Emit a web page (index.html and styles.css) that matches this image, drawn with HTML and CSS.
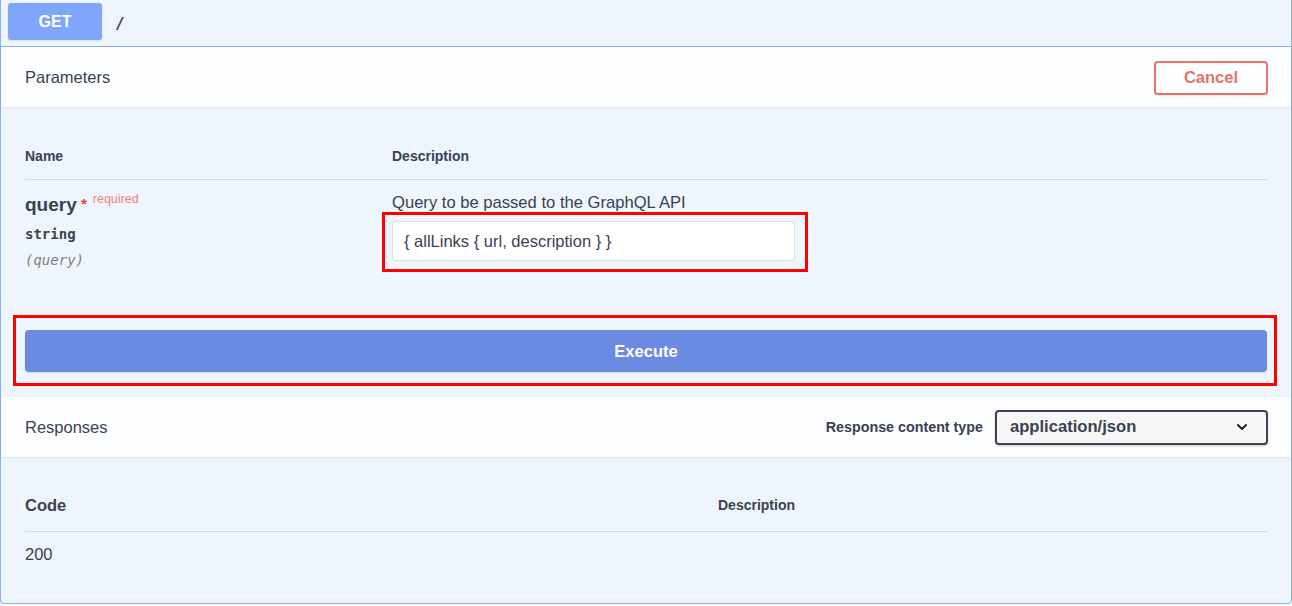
FILE: index.html
```html
<!DOCTYPE html>
<html>
<head>
<meta charset="utf-8">
<link rel="stylesheet" href="styles.css">
</head>
<body>
<div class="opblock">
  <div class="summary">
    <span class="method">GET</span>
    <span class="path">/</span>
  </div>
  <div class="section-header">
    <h4 class="section-title">Parameters</h4>
    <button class="btn-cancel">Cancel</button>
  </div>
  <div class="params">
    <div class="params-head">
      <div class="col-name">Name</div>
      <div class="col-desc">Description</div>
    </div>
    <div class="params-row">
      <div class="col-name">
        <div class="param-name">query<span class="star">&nbsp;*</span><span class="required">required</span></div>
        <div class="param-type">string</div>
        <div class="param-in">(query)</div>
      </div>
      <div class="col-desc">
        <div class="param-desc">Query to be passed to the GraphQL API</div>
        <div class="highlight-input">
          <div class="text-input">{ allLinks { url, description } }</div>
        </div>
      </div>
    </div>
  </div>
  <div class="execute-wrap">
    <div class="highlight-exec">
      <button class="btn-execute">Execute</button>
    </div>
  </div>
  <div class="section-header">
    <h4 class="section-title">Responses</h4>
    <div class="content-type">
      <span class="ct-label">Response content type</span>
      <div class="select">
        <span>application/json</span>
        <svg class="chev" width="14" height="14" viewBox="0 0 14 14"><path d="M3 5 L7 9 L11 5" fill="none" stroke="#222" stroke-width="2" stroke-linecap="round" stroke-linejoin="round"/></svg>
      </div>
    </div>
  </div>
  <div class="responses">
    <div class="resp-head">
      <div class="col-code">Code</div>
      <div class="col-rdesc">Description</div>
    </div>
    <div class="resp-row">
      <div class="col-code code-val">200</div>
      <div class="col-rdesc"></div>
    </div>
  </div>
</div>
</body>
</html>
```

FILE: styles.css
```css
html, body {
  margin: 0;
  padding: 0;
  background: #ffffff;
}
body {
  font-family: "Liberation Sans", Arial, sans-serif;
  color: #3b4151;
  width: 1292px;
  height: 606px;
  overflow: hidden;
}
.opblock {
  box-sizing: border-box;
  width: 1292px;
  height: 604px;
  background: #eff5fd;
  border: 1px solid #8daff7;
  border-top: none;
  border-radius: 0 0 4px 4px;
}
.summary {
  height: 47px;
  box-sizing: border-box;
  display: flex;
  align-items: flex-start;
  padding: 3px 0 0 7px;
  border-bottom: 1px solid #8daff7;
}
.method {
  width: 94px;
  height: 37px;
  background: #7fa6fb;
  border-radius: 3px;
  color: #fff;
  font-weight: bold;
  font-size: 16px;
  display: flex;
  align-items: center;
  justify-content: center;
  box-shadow: 0 1px 2px rgba(0,0,0,0.1);
}
.path {
  font-family: "DejaVu Sans Mono", monospace;
  font-weight: bold;
  font-size: 16px;
  color: #3b4151;
  margin-left: 13px;
  margin-top: 11px;
}
.section-header {
  height: 60px;
  box-sizing: border-box;
  background: rgba(255,255,255,0.8);
  box-shadow: 0 1px 2px rgba(0,0,0,0.08);
  display: flex;
  align-items: center;
  justify-content: space-between;
  padding: 0 23px 0 24px;
}
.section-title {
  margin: 0;
  font-size: 16.5px;
  font-weight: normal;
  color: #3b4151;
}
.btn-cancel {
  width: 114px;
  height: 34px;
  box-sizing: border-box;
  background: transparent;
  border: 2px solid #e4736b;
  border-radius: 4px;
  color: #e4736b;
  font-family: "Liberation Sans", Arial, sans-serif;
  font-weight: bold;
  font-size: 16.5px;
  box-shadow: 0 1px 2px rgba(0,0,0,0.1);
  padding: 0;
  margin-top: 1px;
}
.params {
  padding: 26px 24px 0 24px;
}
.params-head {
  display: flex;
  border-bottom: 1px solid #d3d6dc;
  font-size: 14px;
  font-weight: bold;
  padding: 15px 0 15px;
  line-height: 16px;
}
.col-name {
  width: 367px;
  flex: none;
}
.col-desc {
  flex: 1;
}
.params-row {
  display: flex;
  padding-top: 14px;
}
.param-name {
  font-size: 19px;
  font-weight: bold;
  line-height: 22px;
}
.star {
  color: #e0463c;
  font-size: 15px;
  position: relative;
  top: -2px;
}
.required {
  color: #f0847b;
  font-size: 12.5px;
  font-weight: normal;
  position: relative;
  top: -8px;
  margin-left: 6px;
}
.param-type {
  font-family: "DejaVu Sans Mono", monospace;
  font-weight: bold;
  font-size: 14px;
  line-height: 17px;
  margin-top: 8px;
}
.param-in {
  font-family: "DejaVu Sans Mono", monospace;
  font-style: italic;
  font-size: 14px;
  line-height: 17px;
  color: #808080;
  margin-top: 9px;
}
.param-desc {
  font-size: 16.6px;
  line-height: 18px;
}
.highlight-input {
  width: max-content;
  margin-left: -10px;
  border: 3px solid #ff0000;
  padding: 6px 10px 8px 7px;
}
.text-input {
  width: 403px;
  height: 40px;
  box-sizing: border-box;
  background: #ffffff;
  border: 1px solid #d9dde4;
  border-radius: 4px;
  font-size: 16.5px;
  padding: 0 11px;
  display: flex;
  align-items: center;
  color: #3b4151;
}
.execute-wrap {
  padding: 43px 14px 11px 12px;
}
.highlight-exec {
  border: 3px solid #ff0000;
  padding: 12px 7px 11px 9px;
}
.btn-execute {
  width: 100%;
  height: 42px;
  background: #6b8ae2;
  border: none;
  border-radius: 4px;
  color: #fff;
  font-family: "Liberation Sans", Arial, sans-serif;
  font-weight: bold;
  font-size: 16.5px;
  box-shadow: 0 1px 2px rgba(0,0,0,0.1);
  display: block;
}
.content-type {
  display: flex;
  align-items: center;
}
.ct-label {
  font-size: 14.3px;
  font-weight: bold;
  margin-right: 12px;
}
.select {
  width: 273px;
  height: 35px;
  box-sizing: border-box;
  border: 2px solid #41444e;
  border-radius: 4px;
  background: #f7f7f7;
  display: flex;
  align-items: center;
  justify-content: space-between;
  padding: 0 17px 0 13px;
  font-size: 16.6px;
  font-weight: bold;
  box-shadow: 0 1px 2px rgba(0,0,0,0.2);
}
.chev {
  display: block;
}
.responses {
  padding: 38px 24px 0 24px;
}
.resp-head {
  display: flex;
  align-items: center;
  border-bottom: 1px solid #d3d6dc;
  padding-bottom: 16px;
  line-height: 20px;
}
.col-code {
  width: 693px;
  flex: none;
  font-size: 16.5px;
  font-weight: bold;
}
.col-rdesc {
  flex: 1;
  font-size: 14px;
  font-weight: bold;
}
.resp-row {
  display: flex;
  padding-top: 12px;
  line-height: 20px;
}
.code-val {
  font-weight: normal;
}
```
